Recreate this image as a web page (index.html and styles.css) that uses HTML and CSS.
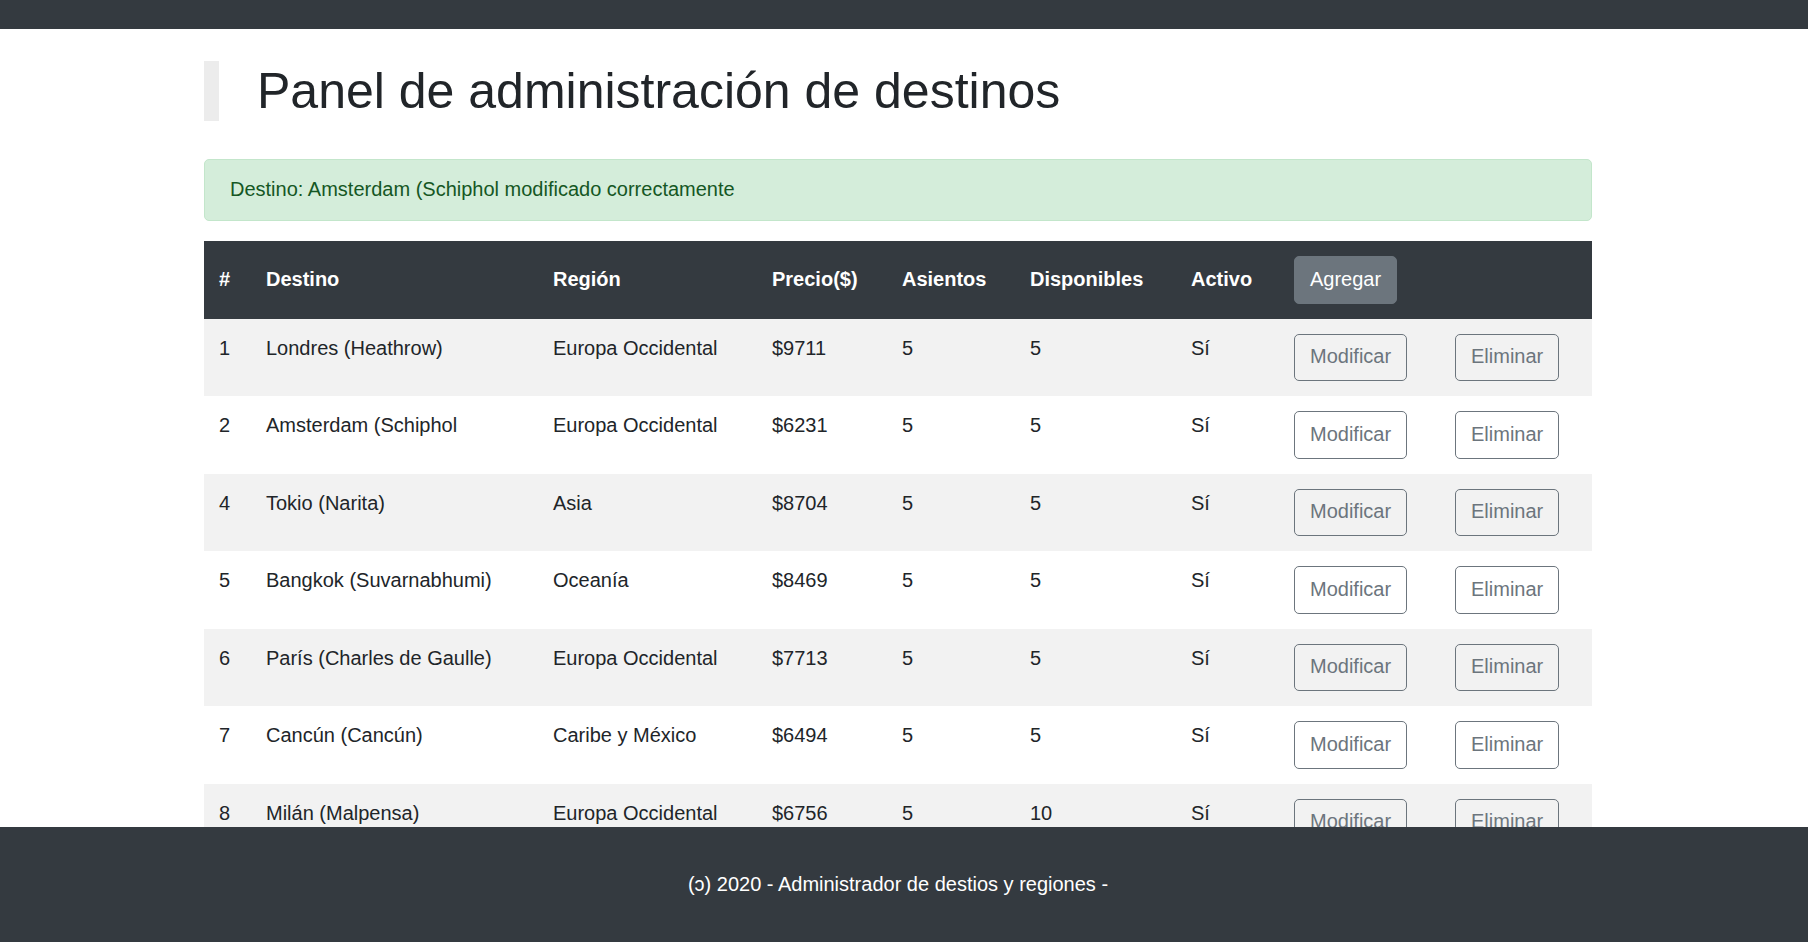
FILE: index.html
```html
<!DOCTYPE html>
<html lang="es">
<head>
<meta charset="utf-8">
<meta name="viewport" content="width=device-width, initial-scale=1">
<title>Panel de administración de destinos</title>
<link rel="stylesheet" href="styles.css">
</head>
<body class="page">
<header class="topbar"></header>
<main class="content">
  <div class="container">
    <h1 class="title">Panel de administración de destinos</h1>
    <div class="alert" role="alert">Destino: Amsterdam (Schiphol modificado correctamente</div>
    <table class="table">
      <colgroup>
        <col class="col-id"><col class="col-destino"><col class="col-region"><col class="col-precio"><col class="col-asientos"><col class="col-disponibles"><col class="col-activo"><col class="col-modificar"><col class="col-eliminar">
      </colgroup>
      <thead>
        <tr><th scope="col">#</th><th scope="col">Destino</th><th scope="col">Región</th><th scope="col">Precio($)</th><th scope="col">Asientos</th><th scope="col">Disponibles</th><th scope="col">Activo</th><th scope="col"><button type="button" class="btn btn-solid">Agregar</button></th><th></th></tr>
      </thead>
      <tbody>
        <tr><td>1</td><td>Londres (Heathrow)</td><td>Europa Occidental</td><td>$9711</td><td>5</td><td>5</td><td>Sí</td><td><button type="button" class="btn">Modificar</button></td><td><button type="button" class="btn">Eliminar</button></td></tr>
        <tr><td>2</td><td>Amsterdam (Schiphol</td><td>Europa Occidental</td><td>$6231</td><td>5</td><td>5</td><td>Sí</td><td><button type="button" class="btn">Modificar</button></td><td><button type="button" class="btn">Eliminar</button></td></tr>
        <tr><td>4</td><td>Tokio (Narita)</td><td>Asia</td><td>$8704</td><td>5</td><td>5</td><td>Sí</td><td><button type="button" class="btn">Modificar</button></td><td><button type="button" class="btn">Eliminar</button></td></tr>
        <tr><td>5</td><td>Bangkok (Suvarnabhumi)</td><td>Oceanía</td><td>$8469</td><td>5</td><td>5</td><td>Sí</td><td><button type="button" class="btn">Modificar</button></td><td><button type="button" class="btn">Eliminar</button></td></tr>
        <tr><td>6</td><td>París (Charles de Gaulle)</td><td>Europa Occidental</td><td>$7713</td><td>5</td><td>5</td><td>Sí</td><td><button type="button" class="btn">Modificar</button></td><td><button type="button" class="btn">Eliminar</button></td></tr>
        <tr><td>7</td><td>Cancún (Cancún)</td><td>Caribe y México</td><td>$6494</td><td>5</td><td>5</td><td>Sí</td><td><button type="button" class="btn">Modificar</button></td><td><button type="button" class="btn">Eliminar</button></td></tr>
        <tr><td>8</td><td>Milán (Malpensa)</td><td>Europa Occidental</td><td>$6756</td><td>5</td><td>10</td><td>Sí</td><td><button type="button" class="btn">Modificar</button></td><td><button type="button" class="btn">Eliminar</button></td></tr>
      </tbody>
    </table>
  </div>
</main>
<footer class="footer">(ɔ) 2020 - Administrador de destios y regiones -</footer>
</body>
</html>
```
FILE: styles.css
```css
* {
  box-sizing: border-box;
}

.page {
  --dark: #343a40;
  --gray: #6c757d;
  --gutter: 12px;
  display: flex;
  flex-direction: column;
  height: 100vh;
  margin: 0;
  background: #fff;
  color: #212529;
  font: 20px/28px "Liberation Sans", Arial, sans-serif;
}

.topbar {
  flex: none;
  height: 29px;
  background: var(--dark);
}

.content {
  flex: 1;
  min-height: 0;
  padding: 32px var(--gutter) 0 0;
  overflow-y: auto;
  scrollbar-width: none;
}

.container {
  max-width: 1388px;
  margin: 0 auto;
}

.title {
  margin: 0 0 38px;
  padding-left: 38px;
  border-left: 15px solid #ececec;
  font-size: 50px;
  font-weight: 400;
  line-height: 60px;
}

.alert {
  margin-bottom: 20px;
  padding: 15px 25px 17px;
  border: 1px solid #c3e6cb;
  border-radius: 5px;
  background: #d4edda;
  color: #155724;
}

.table {
  width: 100%;
  border-collapse: collapse;
  table-layout: fixed;
}

.col-id { width: 47px; }
.col-region { width: 219px; }
.col-precio { width: 130px; }
.col-asientos { width: 128px; }
.col-disponibles { width: 161px; }
.col-activo { width: 103px; }
.col-modificar { width: 161px; }
.col-eliminar { width: 152px; }

.table th,
.table td {
  padding: 15px;
  text-align: left;
  vertical-align: top;
}

.table th {
  background: var(--dark);
  color: #fff;
  vertical-align: baseline;
}

.table tbody tr:nth-child(odd) {
  background: #f2f2f2;
}

.btn {
  display: block;
  padding: 8px 15px 10px;
  border: 1px solid var(--gray);
  border-radius: 5px;
  background: transparent;
  color: var(--gray);
  font: inherit;
  font-weight: 400;
  cursor: pointer;
}

.table tbody tr:nth-child(odd) .btn {
  padding-top: 7px;
}

.btn-solid {
  background: var(--gray);
  color: #fff;
}

.footer {
  flex: none;
  padding: 43px var(--gutter) 44px 0;
  background: var(--dark);
  color: #fff;
  text-align: center;
}
```
